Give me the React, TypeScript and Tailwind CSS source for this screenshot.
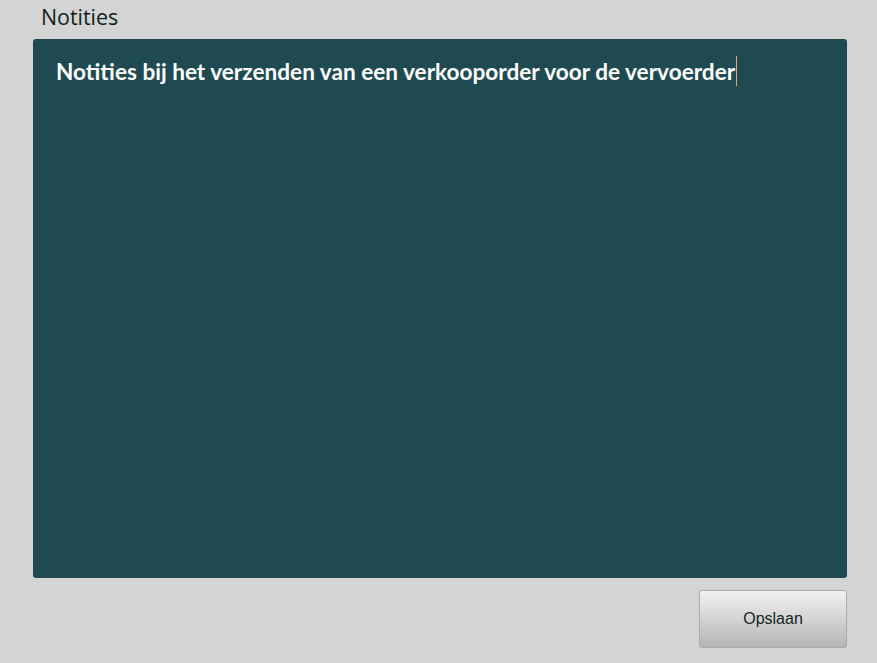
import React from "react";

export default function App() {
  return (
    <div className="w-[877px] h-[663px] bg-[#d4d4d4] flex flex-col overflow-hidden">
      <div className="pl-[41px] pt-[4px] h-[39px] text-[21.4px] leading-[26px] text-[#0e1c1c]" style={{ fontFamily: '"Open Sans", sans-serif' }}>
        Notities
      </div>
      <div className="ml-[33px] w-[814px] h-[539px] bg-[#204a52] rounded-[3px] pl-[23px] pt-[17px]">
        <div className="flex items-start">
          <span className="text-[22.6px] leading-[32px] font-bold text-white" style={{ fontFamily: 'Lato, sans-serif' }}>
            Notities bij het verzenden van een verkooporder voor de vervoerder
          </span>
          <span className="w-px h-[30px] bg-[#e8a07c] ml-[1px]" />
        </div>
      </div>
      <div className="flex justify-end pr-[30px] pt-[12px]">
        <button className="w-[148px] h-[58px] rounded-[3px] border border-[#a9a9a9] bg-gradient-to-b from-[#f2f2f2] to-[#b5b5b5] text-[16px] text-[#142424]" style={{ fontFamily: '"Liberation Sans", Arial, sans-serif' }}>
          Opslaan
        </button>
      </div>
    </div>
  );
}
